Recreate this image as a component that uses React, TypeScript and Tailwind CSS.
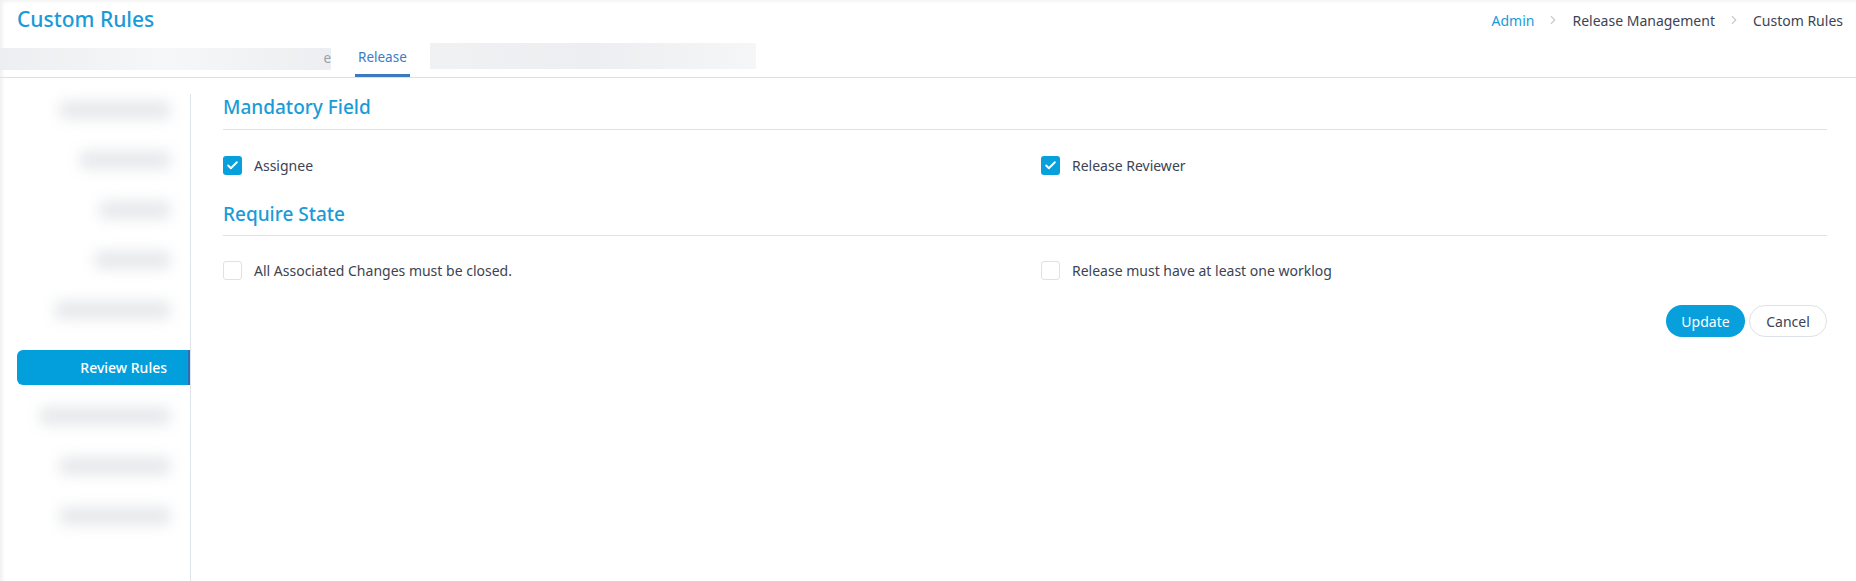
import { Check, ChevronRight } from "lucide-react";

const font = "font-['Noto_Sans',sans-serif]";

const crumbs = ["Admin", "Release Management", "Custom Rules"];

const sidebarTop = ["w-[110px]", "w-[90px]", "w-[70px]", "w-[75px]", "w-[115px]"];
const sidebarBottom = ["w-[130px]", "w-[110px]", "w-[110px]"];

function Checkbox({ checked, label }: { checked: boolean; label: string }) {
  return (
    <label className="flex items-center gap-3 text-[14px] text-[#3d4353]">
      {checked ? (
        <span className="flex h-[19px] w-[19px] items-center justify-center rounded-[3px] bg-[#079fdc] text-white">
          <Check size={13} strokeWidth={3.5} />
        </span>
      ) : (
        <span className="h-[19px] w-[19px] rounded-[3px] border border-[#dde1e8] bg-white" />
      )}
      {label}
    </label>
  );
}

function BlurItem({ width }: { width: string }) {
  return (
    <div className="flex h-[50px] items-start justify-end pr-[20px] pt-[7px]">
      <span className={`h-[18px] ${width} rounded bg-[#e6e8eb] blur-[7px]`} />
    </div>
  );
}

export default function App() {
  return (
    <div className={`${font} min-h-[581px] bg-white shadow-[inset_4px_3px_4px_-2px_rgba(0,0,0,0.07)]`}>
      {/* Header */}
      <div className="flex h-[40px] items-center justify-between pl-[17px] pr-[13px]">
        <h1 className="text-[21px] font-medium text-[#1a9bd8]">Custom Rules</h1>
        <nav className="flex items-center gap-[12px] text-[14px]">
          {crumbs.map((c, i) => (
            <div key={c} className="flex items-center gap-[12px]">
              {i > 0 && <ChevronRight size={14} className="text-[#c8ccd3]" />}
              <span className={i === 0 ? "text-[#1a9bd8]" : "text-[#3d4353]"}>{c}</span>
            </div>
          ))}
        </nav>
      </div>

      {/* Tabs */}
      <div className="flex h-[38px] items-end border-b border-[#dde0e8]">
        <div className="flex h-full items-center">
          <div className="flex h-[22px] w-[331px] items-center justify-end bg-linear-to-r from-[#eceef1] via-[#f6f7f8] to-[#eceef1]">
            <span className="text-[13.5px] text-[#9aa0aa]">e</span>
          </div>
        </div>
        <div className="ml-[24px] flex h-full flex-col justify-end">
          <span className="px-[3px] pb-[7px] text-[13.5px] text-[#3b7cc4]">Release</span>
          <span className="h-[3px] bg-[#3a7bbf]" />
        </div>
        <div className="ml-[20px] flex h-full items-center pb-[6px]">
          <div className="h-[26px] w-[326px] bg-linear-to-r from-[#f0f1f3] via-[#eceef1] to-[#f5f6f7]" />
        </div>
      </div>

      {/* Body */}
      <div className="flex">
        <aside className="mt-4 flex min-h-[487px] w-[191px] flex-col border-r border-[#dfe3ea] pl-[17px]">
          <div className="flex flex-col">
            {sidebarTop.map((w, i) => (
              <BlurItem key={i} width={w} />
            ))}
          </div>
          <button className="mt-[6px] h-[35px] rounded-l-[6px] border-r-2 border-[#2f6db5] bg-[#039fdd] pr-[21px] text-right text-[14px] font-medium text-white">
            Review Rules
          </button>
          <div className="mt-[15px] flex flex-col">
            {sidebarBottom.map((w, i) => (
              <BlurItem key={i} width={w} />
            ))}
          </div>
        </aside>

        <main className="flex-1 pl-8 pr-[29px] pt-[15px]">
          <h2 className="pb-[8px] text-[19px] font-medium leading-[28px] text-[#1a9bd8]">Mandatory Field</h2>
          <div className="border-t border-[#dfe2e8]" />
          <div className="grid h-[70px] grid-cols-[818px_1fr] items-center">
            <Checkbox checked label="Assignee" />
            <Checkbox checked label="Release Reviewer" />
          </div>
          <h2 className="pb-[7px] text-[19px] font-medium leading-[28px] text-[#1a9bd8]">Require State</h2>
          <div className="border-t border-[#dfe2e8]" />
          <div className="grid h-[69px] grid-cols-[818px_1fr] items-center">
            <Checkbox checked={false} label="All Associated Changes must be closed." />
            <Checkbox checked={false} label="Release must have at least one worklog" />
          </div>
          <div className="flex justify-end gap-[4px]">
            <button className="h-[32px] w-[79px] rounded-full bg-[#079fdc] text-[14px] text-white">Update</button>
            <button className="h-[32px] w-[78px] rounded-full border border-[#dde1e8] bg-white text-[14px] text-[#3d4353]">
              Cancel
            </button>
          </div>
        </main>
      </div>
    </div>
  );
}
